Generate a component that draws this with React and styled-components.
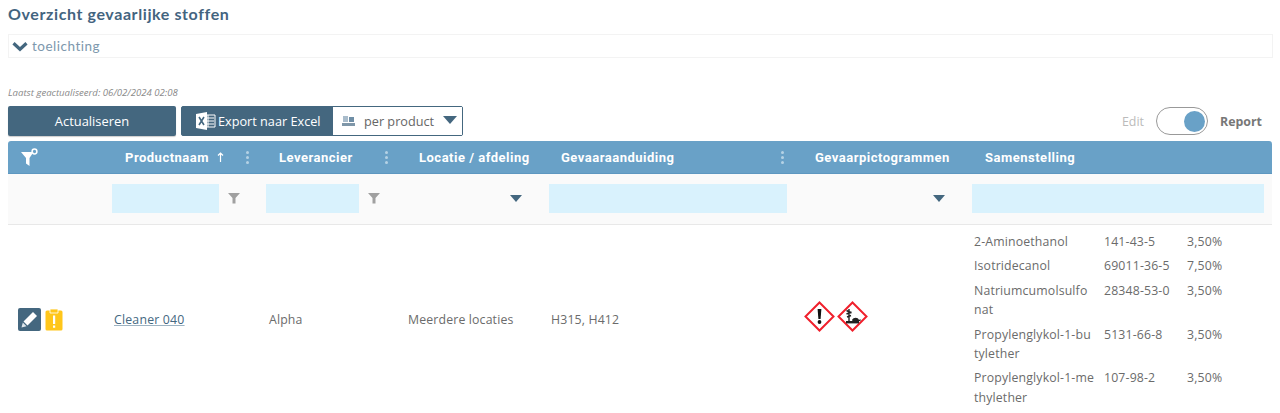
import React from "react";
import styled, { createGlobalStyle } from "styled-components";

const GlobalStyle = createGlobalStyle`
	html, body {
		margin: 0;
		padding: 0;
		height: 413px;
		overflow: hidden;
		background: #ffffff;
		font-family: "Open Sans", "Liberation Sans", sans-serif;
	}
`;

const Page = styled.div`
	padding: 5px 8px 0;
	width: 1264px;
`;

const Title = styled.h1`
	margin: 0;
	height: 18px;
	font-family: "Lato", "Liberation Sans", sans-serif;
	font-size: 16px;
	line-height: 18px;
	font-weight: 700;
	letter-spacing: 0.6px;
	color: #43647f;
`;

const Explain = styled.div`
	margin-top: 11px;
	height: 22px;
	width: 1260px;
	border: 1px solid #f3f3f3;
	display: flex;
	align-items: center;
	gap: 4px;
	padding-left: 3px;
	box-sizing: content-box;
	font-family: "Lato", "Liberation Sans", sans-serif;
	font-size: 13.5px;
	letter-spacing: 0.5px;
	color: #7d98ad;
`;

const Updated = styled.div`
	margin-top: 28px;
	height: 13px;
	font-size: 9.6px;
	line-height: 13px;
	font-style: italic;
	color: #8a8a8a;
`;

const Toolbar = styled.div`
	margin-top: 7px;
	height: 30px;
	display: flex;
	align-items: center;
	gap: 5px;
`;

const MainButton = styled.button`
	width: 168px;
	height: 30px;
	border: 0;
	border-radius: 2px;
	padding: 0;
	background: #44677f;
	color: #ffffff;
	font-family: inherit;
	font-size: 12.9px;
	box-shadow: 0 1px 1px rgba(0, 0, 0, 0.2);
`;

const ExportGroup = styled.div`
	width: 282px;
	height: 30px;
	box-sizing: border-box;
	display: flex;
	border: 1px solid #44677f;
	border-radius: 2px;
	background: #44677f;
`;

const ExportLabel = styled.div`
	width: 151px;
	display: flex;
	align-items: center;
	gap: 2px;
	padding-left: 14px;
	box-sizing: border-box;
	color: #ffffff;
	font-size: 12.7px;
	white-space: nowrap;
`;

const ExportSelect = styled.div`
	flex: 1;
	background: #ffffff;
	display: flex;
	align-items: center;
	padding-left: 9px;
	color: #666666;
	font-size: 12.7px;
	gap: 9px;
	white-space: nowrap;
`;

const BigCaret = styled.span`
	width: 0;
	height: 0;
	margin-top: -3px;
	border-left: 7px solid transparent;
	border-right: 7px solid transparent;
	border-top: 8px solid #44677f;
`;

const ToggleArea = styled.div`
	margin-left: auto;
	display: flex;
	align-items: center;
	gap: 12px;
	padding-right: 10px;
	font-size: 12.4px;
`;

const ModeLabel = styled.span`
	color: ${(props) => (props.$active ? "#777777" : "#bbbbbb")};
	font-weight: ${(props) => (props.$active ? 700 : 400)};
`;

const Toggle = styled.div`
	width: 52px;
	height: 28px;
	box-sizing: border-box;
	border: 1px solid #999999;
	border-radius: 14px;
	display: flex;
	align-items: center;
	justify-content: flex-end;
	padding-right: 2px;
`;

const Knob = styled.div`
	width: 21px;
	height: 21px;
	border-radius: 50%;
	background: #69a1c7;
`;

const Columns = "100px 154px 142px 141px 256px 167px 304px";

const HeaderRow = styled.div`
	margin-top: 5px;
	height: 32px;
	display: grid;
	grid-template-columns: ${Columns};
	background: #69a1c7;
	border-radius: 3px 3px 0 0;
	border-bottom: 1px solid #5d97c0;
`;

const HeaderCell = styled.div`
	display: flex;
	align-items: center;
	padding-left: ${(props) => props.$pad}px;
	padding-right: ${(props) => props.$right || 12}px;
	color: #ffffff;
	font-family: "Roboto", "Liberation Sans", sans-serif;
	font-size: 13px;
	font-weight: 700;
	letter-spacing: 0.5px;
	white-space: nowrap;
`;

const SortArrow = styled.span`
	margin-left: 8px;
	display: flex;
`;

const Dots = styled.span`
	margin-left: auto;
	display: flex;
	flex-direction: column;
	gap: 2px;

	i {
		width: 3px;
		height: 3px;
		border-radius: 50%;
		background: #b5d2e5;
		display: block;
	}
`;

const FilterRow = styled.div`
	height: 50px;
	display: grid;
	grid-template-columns: ${Columns};
	background: #fafafa;
	border-bottom: 1px solid #e8e8e8;
`;

const FilterCell = styled.div`
	display: flex;
	align-items: center;
	padding: 0 ${(props) => props.$right || 8}px 2px 4px;
	gap: 9px;
	justify-content: ${(props) => (props.$end ? "flex-end" : "flex-start")};
`;

const FilterInput = styled.div`
	height: 29px;
	flex: ${(props) => (props.$width ? "none" : 1)};
	width: ${(props) => (props.$width ? `${props.$width}px` : "auto")};
	background: #d9f2fd;
`;

const SmallCaret = styled.span`
	width: 0;
	height: 0;
	margin-right: 15px;
	border-left: 6.5px solid transparent;
	border-right: 6.5px solid transparent;
	border-top: 7px solid #44677f;
`;

const BodyRow = styled.div`
	height: 189px;
	display: grid;
	grid-template-columns: ${Columns};
	align-items: center;
	font-size: 12.3px;
	color: #6b6b6b;
`;

const BodyCell = styled.div`
	padding-left: ${(props) => props.$pad || 0}px;
	letter-spacing: 0.15px;
`;

const ActionCell = styled.div`
	display: flex;
	align-items: center;
	gap: 4px;
	padding-left: 10px;
`;

const EditButton = styled.div`
	width: 23px;
	height: 23px;
	border-radius: 2px;
	background: #44677f;
	display: flex;
	align-items: center;
	justify-content: center;
`;

const ProductLink = styled.a`
	color: #44677f;
	text-decoration: underline;
	text-decoration-color: #9db3c2;
	letter-spacing: 0.2px;
`;

const Pictos = styled.div`
	display: flex;
	gap: 2px;
	padding-left: 3px;
	margin-top: -6px;
`;

const Composition = styled.div`
	display: grid;
	grid-template-columns: 130px 83px 60px;
	row-gap: 5px;
	padding-left: 6px;
	line-height: 19.4px;
	letter-spacing: 0.15px;
`;

const Substance = styled.span`
	width: 120.5px;
	word-break: break-all;
`;

const ExcelIcon = () => (
	<svg width="20" height="18" viewBox="0 0 20 18">
		<path d="M8 3h11v12H8z" fill="none" stroke="#fff" />
		<path d="M12 3v12M9 6h9M9 9h9M9 12h9" stroke="#fff" strokeWidth="1" />
		<path d="M0 2l11-2v18L0 16z" fill="#fff" />
		<path d="M3 5l5 8M8 5l-5 8" stroke="#44677f" strokeWidth="1.6" />
	</svg>
);

const ProductIcon = () => (
	<svg width="13" height="11" viewBox="0 0 13 11">
		<path d="M1 0h5v6H1z" fill="#a9bccb" />
		<path d="M7 1h5v5H7z" fill="#6f8ea6" />
		<path d="M0 7h13v3H0z" fill="#7f97a9" />
	</svg>
);

const ChevronIcon = () => (
	<svg width="16" height="11" viewBox="0 0 16 11">
		<path d="M1.5 2.2L8 8.2l6.5-6" fill="none" stroke="#44677f" strokeWidth="3.2" />
	</svg>
);

const FilterSettingsIcon = () => (
	<svg width="17" height="18" viewBox="0 0 17 18">
		<path d="M0 4h12.5L8.5 10v8L5 15.5V10z" fill="#fff" />
		<circle cx="13.5" cy="3.5" r="2.4" fill="none" stroke="#fff" strokeWidth="1.5" />
	</svg>
);

const UpArrow = () => (
	<svg width="7" height="10" viewBox="0 0 7 10">
		<path d="M3.5 10V1M1 3.5L3.5 1 6 3.5" fill="none" stroke="#fff" strokeWidth="1.2" />
	</svg>
);

const FunnelIcon = () => (
	<svg width="12" height="12" viewBox="0 0 12 12">
		<path d="M0 1h12L7.5 6v5.5h-3V6z" fill="#a0a0a0" />
	</svg>
);

const PencilIcon = () => (
	<svg width="17" height="17" viewBox="0 0 17 17">
		<path d="M12 1l4 4-9.5 9.5-4-4z" fill="#fff" />
		<path d="M1.8 11.5l3.7 3.7L0.5 16.5z" fill="#dfe7ec" />
	</svg>
);

const ClipboardIcon = () => (
	<svg width="18" height="23" viewBox="0 0 18 23">
		<rect x="0.5" y="2.5" width="17" height="20" rx="1.5" fill="#ffc61a" />
		<path d="M5 1h8v4H5z" fill="#ffc61a" stroke="#fff" strokeWidth="0.8" />
		<path d="M8 7.5h2.2v8.5H8zM8 17.5h2.2v2.2H8z" fill="#fff" />
	</svg>
);

const GhsFrame = ({ children }) => (
	<svg width="31" height="31" viewBox="0 0 31 31">
		<path d="M15.5 1.5l14 14-14 14-14-14z" fill="#fff" stroke="#f0202c" strokeWidth="2" />
		{children}
	</svg>
);

const substances = [
	{ name: "2-Aminoethanol", cas: "141-43-5", pct: "3,50%" },
	{ name: "Isotridecanol", cas: "69011-36-5", pct: "7,50%" },
	{ name: "Natriumcumolsulfonat", cas: "28348-53-0", pct: "3,50%" },
	{ name: "Propylenglykol-1-butylether", cas: "5131-66-8", pct: "3,50%" },
	{ name: "Propylenglykol-1-methylether", cas: "107-98-2", pct: "3,50%" },
];

const App = () => {
	return (
		<Page>
			<GlobalStyle />
			<Title>Overzicht gevaarlijke stoffen</Title>
			<Explain>
				<ChevronIcon />
				toelichting
			</Explain>
			<Updated>Laatst geactualiseerd: 06/02/2024 02:08</Updated>
			<Toolbar>
				<MainButton>Actualiseren</MainButton>
				<ExportGroup>
					<ExportLabel>
						<ExcelIcon />
						Export naar Excel
					</ExportLabel>
					<ExportSelect>
						<ProductIcon />
						per product
						<BigCaret />
					</ExportSelect>
				</ExportGroup>
				<ToggleArea>
					<ModeLabel>Edit</ModeLabel>
					<Toggle>
						<Knob />
					</Toggle>
					<ModeLabel $active>Report</ModeLabel>
				</ToggleArea>
			</Toolbar>
			<HeaderRow>
				<HeaderCell $pad={13}>
					<FilterSettingsIcon />
				</HeaderCell>
				<HeaderCell $pad={17} $right={13}>
					Productnaam
					<SortArrow>
						<UpArrow />
					</SortArrow>
					<Dots>
						<i />
						<i />
						<i />
					</Dots>
				</HeaderCell>
				<HeaderCell $pad={17} $right={16}>
					Leverancier
					<Dots>
						<i />
						<i />
						<i />
					</Dots>
				</HeaderCell>
				<HeaderCell $pad={15}>Locatie / afdeling</HeaderCell>
				<HeaderCell $pad={16} $right={17}>
					Gevaaraanduiding
					<Dots>
						<i />
						<i />
						<i />
					</Dots>
				</HeaderCell>
				<HeaderCell $pad={14}>Gevaarpictogrammen</HeaderCell>
				<HeaderCell $pad={17}>Samenstelling</HeaderCell>
			</HeaderRow>
			<FilterRow>
				<FilterCell />
				<FilterCell>
					<FilterInput $width={107} />
					<FunnelIcon />
				</FilterCell>
				<FilterCell>
					<FilterInput $width={93} />
					<FunnelIcon />
				</FilterCell>
				<FilterCell $end>
					<SmallCaret />
				</FilterCell>
				<FilterCell $right={14}>
					<FilterInput />
				</FilterCell>
				<FilterCell $end>
					<SmallCaret />
				</FilterCell>
				<FilterCell>
					<FilterInput />
				</FilterCell>
			</FilterRow>
			<BodyRow>
				<ActionCell>
					<EditButton>
						<PencilIcon />
					</EditButton>
					<ClipboardIcon />
				</ActionCell>
				<BodyCell $pad={6}>
					<ProductLink href="#">Cleaner 040</ProductLink>
				</BodyCell>
				<BodyCell $pad={7}>Alpha</BodyCell>
				<BodyCell $pad={4}>Meerdere locaties</BodyCell>
				<BodyCell $pad={6}>H315, H412</BodyCell>
				<Pictos>
					<GhsFrame>
						<path d="M13.6 8h3.8l-.8 10h-2.2z" fill="#111" />
						<circle cx="15.5" cy="21" r="1.9" fill="#111" />
					</GhsFrame>
					<GhsFrame>
						<path d="M12 8v12M9.5 9.5l5 2.5M9.5 13l5-2M10 16l4-1.5" stroke="#222" strokeWidth="1.4" fill="none" />
						<path d="M9 20h13v2.4H9z" fill="#222" />
						<path d="M15 19c1.5-3 6-3 7 0l1.5-1v2h-8z" fill="#222" />
					</GhsFrame>
				</Pictos>
				<Composition>
					{substances.map((s) => (
						<React.Fragment key={s.name}>
							<Substance>{s.name}</Substance>
							<span>{s.cas}</span>
							<span>{s.pct}</span>
						</React.Fragment>
					))}
				</Composition>
			</BodyRow>
		</Page>
	);
};

export default App;
